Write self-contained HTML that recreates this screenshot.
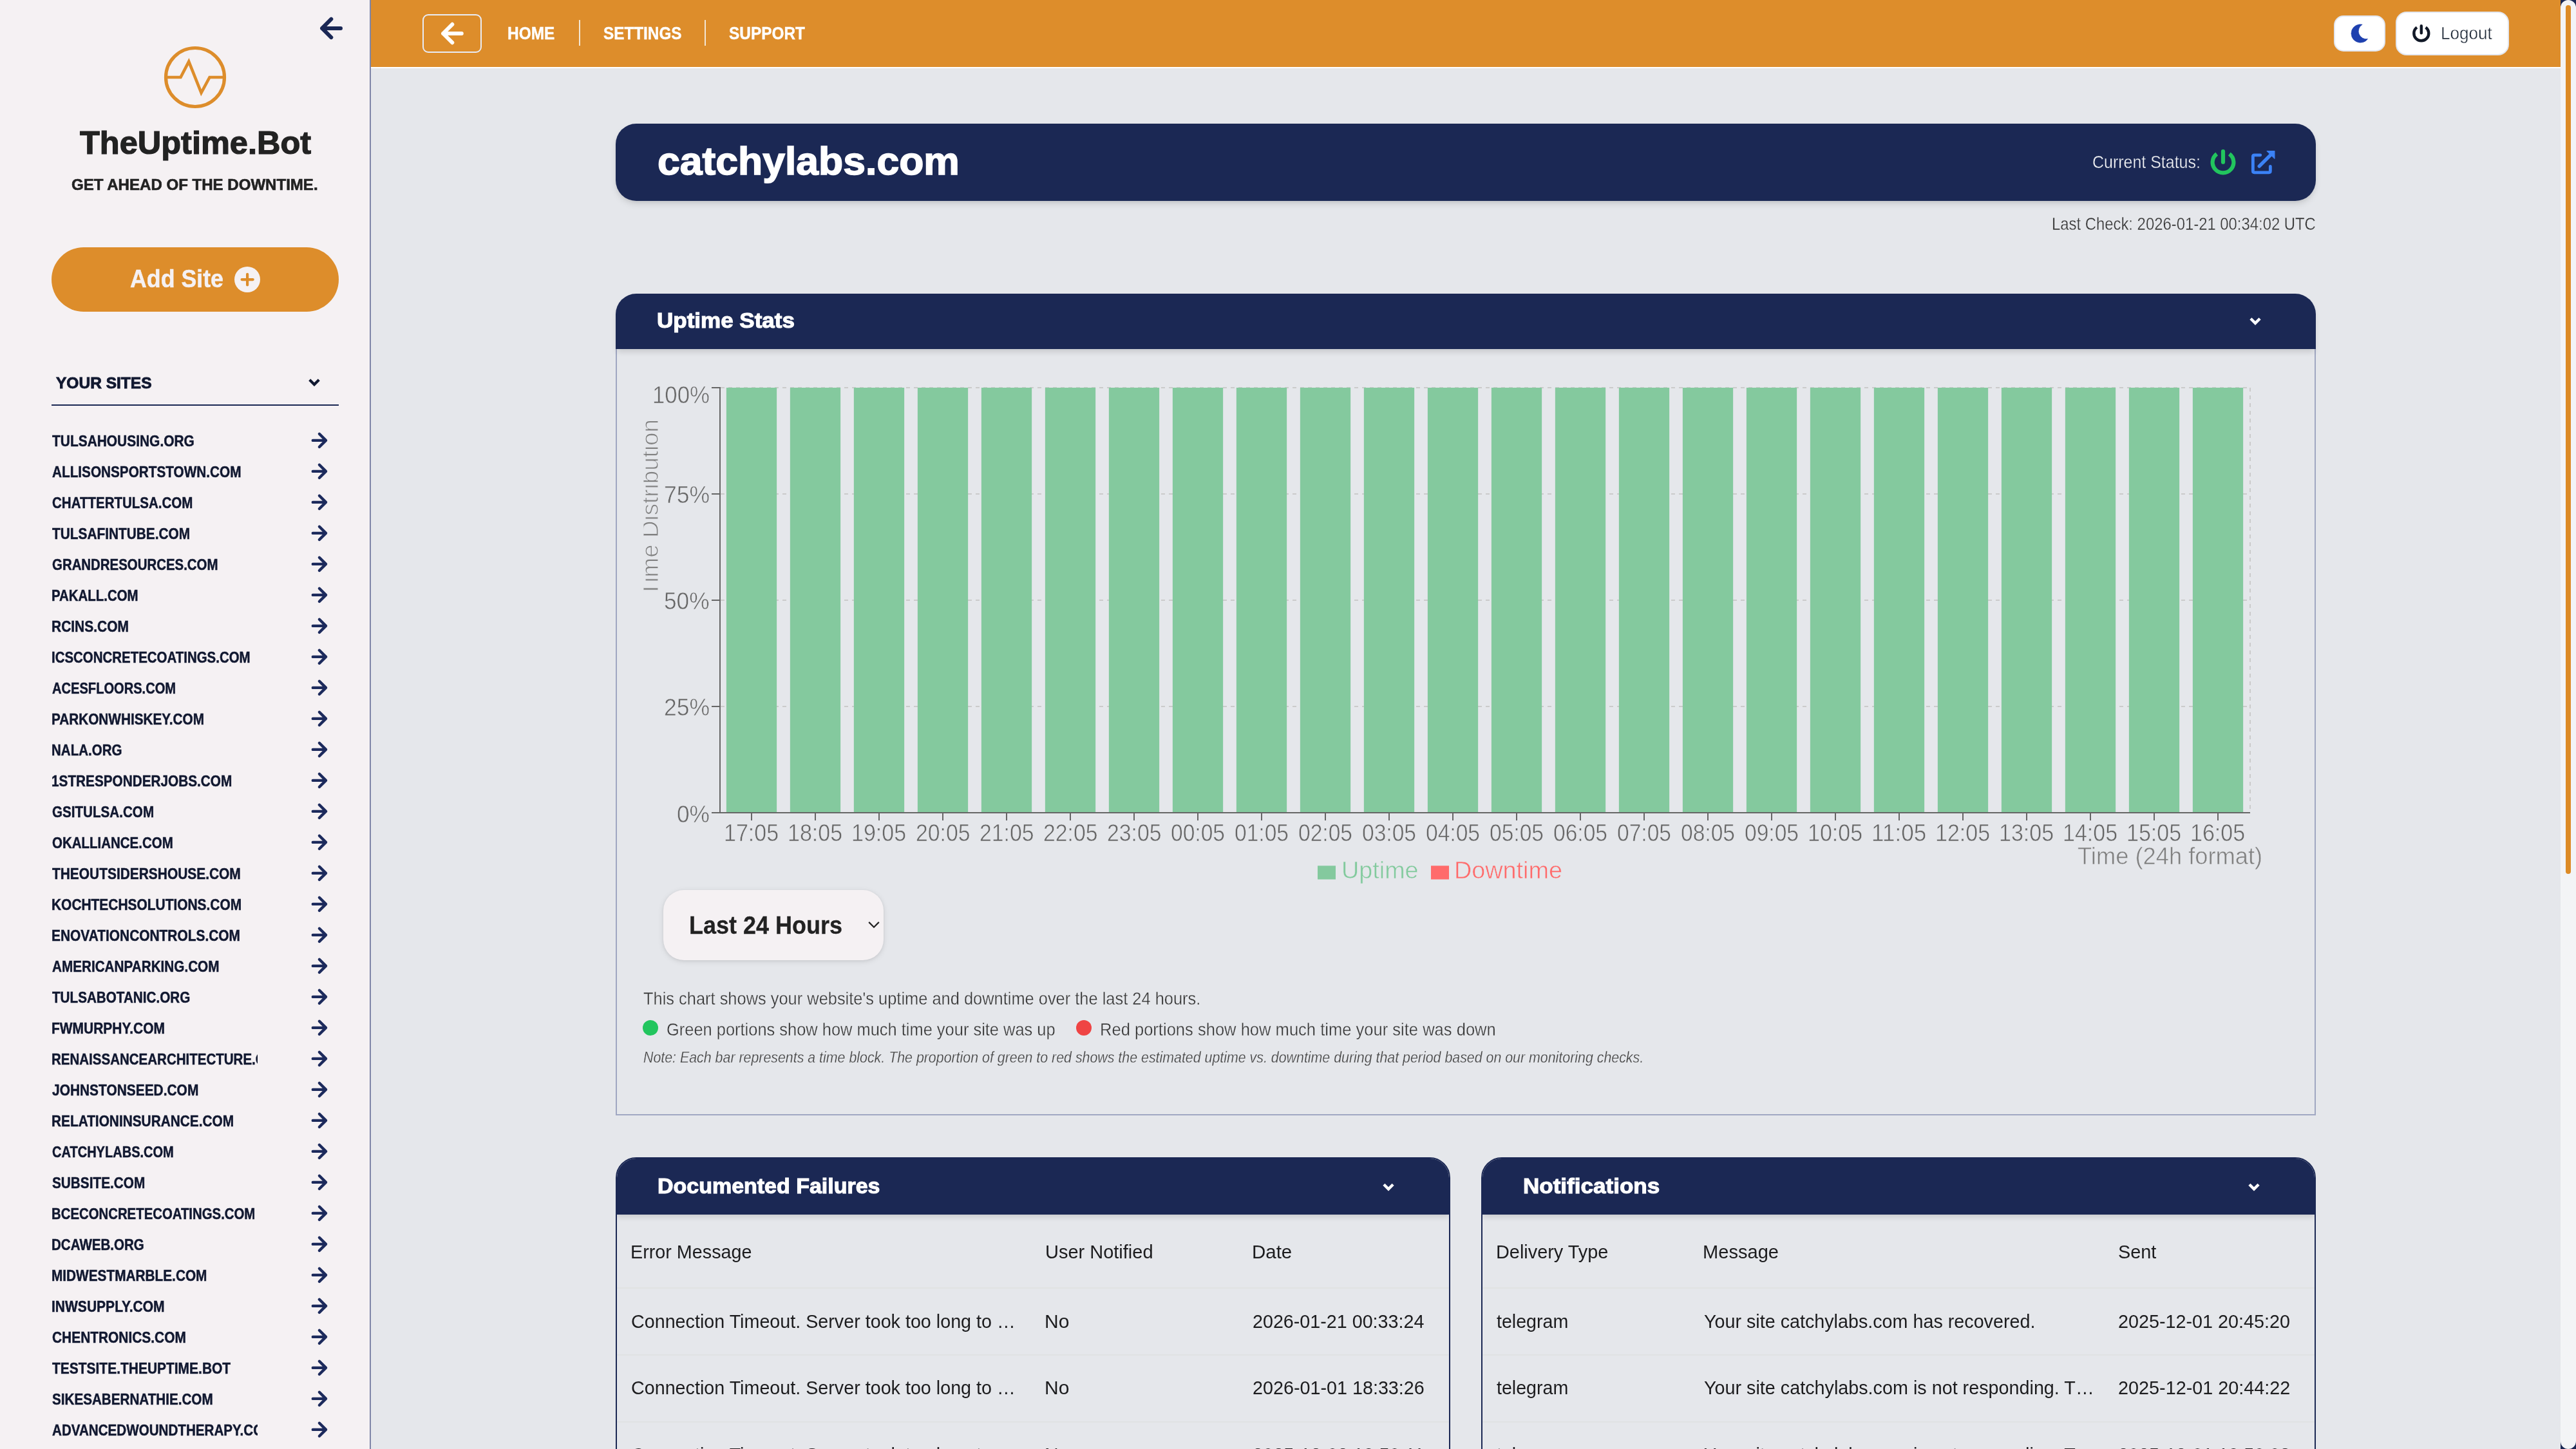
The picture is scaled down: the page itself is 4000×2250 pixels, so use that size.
<!DOCTYPE html>
<html lang="en"><head><meta charset="utf-8"><title>TheUptime.Bot - catchylabs.com</title>
<style>
html,body{margin:0;padding:0}
body{width:4000px;height:2250px;overflow:hidden;position:relative;background:#e5e7eb;font-family:"Liberation Sans",sans-serif}
.t{position:absolute;white-space:nowrap;line-height:1;transform-origin:0 0;font-family:"Liberation Sans",sans-serif}
.a{position:absolute}
svg{position:absolute;left:0;top:0;overflow:visible}
</style></head><body>

<!-- main background -->
<div class="a" style="left:576px;top:106px;width:3400px;height:2144px;background:#e5e7eb"></div>

<!-- SIDEBAR -->
<aside class="a" style="left:0;top:0;width:574px;height:2250px;background:#f5f1f3;border-right:2px solid #7f86a8"></aside>
<button class="a" style="left:80px;top:384px;width:446px;height:100px;border:0;padding:0;border-radius:50px;background:#dd8d2b"></button>
<div class="a" style="left:364px;top:414px;width:40px;height:40px;border-radius:50%;background:#f5f1f3"></div>
<div class="a" style="left:80px;top:628px;width:446px;height:2px;background:#1b2854"></div>
<nav class="a" style="left:80px;top:650px;width:320px;height:1600px;overflow:hidden;will-change:transform">
<div class="a" style="left:-80px;top:-650px;width:600px;height:2250px">
<span class="t" style="left:81.25px;top:674.49px;font-size:23.4px;color:#111830;transform:scaleX(0.8945);font-weight:bold;-webkit-text-stroke:0.5px #111830;">TULSAHOUSING.ORG</span>
<span class="t" style="left:80.93px;top:722.49px;font-size:23.4px;color:#111830;transform:scaleX(0.8868);font-weight:bold;-webkit-text-stroke:0.5px #111830;">ALLISONSPORTSTOWN.COM</span>
<span class="t" style="left:80.61px;top:770.49px;font-size:23.4px;color:#111830;transform:scaleX(0.8770);font-weight:bold;-webkit-text-stroke:0.5px #111830;">CHATTERTULSA.COM</span>
<span class="t" style="left:81.25px;top:818.49px;font-size:23.4px;color:#111830;transform:scaleX(0.8906);font-weight:bold;-webkit-text-stroke:0.5px #111830;">TULSAFINTUBE.COM</span>
<span class="t" style="left:80.61px;top:866.49px;font-size:23.4px;color:#111830;transform:scaleX(0.8729);font-weight:bold;-webkit-text-stroke:0.5px #111830;">GRANDRESOURCES.COM</span>
<span class="t" style="left:79.97px;top:914.49px;font-size:23.4px;color:#111830;transform:scaleX(0.8728);font-weight:bold;-webkit-text-stroke:0.5px #111830;">PAKALL.COM</span>
<span class="t" style="left:79.94px;top:962.49px;font-size:23.4px;color:#111830;transform:scaleX(0.8962);font-weight:bold;-webkit-text-stroke:0.5px #111830;">RCINS.COM</span>
<span class="t" style="left:79.97px;top:1010.49px;font-size:23.4px;color:#111830;transform:scaleX(0.8742);font-weight:bold;-webkit-text-stroke:0.5px #111830;">ICSCONCRETECOATINGS.COM</span>
<span class="t" style="left:80.94px;top:1058.49px;font-size:23.4px;color:#111830;transform:scaleX(0.8594);font-weight:bold;-webkit-text-stroke:0.5px #111830;">ACESFLOORS.COM</span>
<span class="t" style="left:79.95px;top:1106.49px;font-size:23.4px;color:#111830;transform:scaleX(0.8867);font-weight:bold;-webkit-text-stroke:0.5px #111830;">PARKONWHISKEY.COM</span>
<span class="t" style="left:79.97px;top:1154.49px;font-size:23.4px;color:#111830;transform:scaleX(0.8774);font-weight:bold;-webkit-text-stroke:0.5px #111830;">NALA.ORG</span>
<span class="t" style="left:79.95px;top:1202.49px;font-size:23.4px;color:#111830;transform:scaleX(0.8871);font-weight:bold;-webkit-text-stroke:0.5px #111830;">1STRESPONDERJOBS.COM</span>
<span class="t" style="left:80.61px;top:1250.49px;font-size:23.4px;color:#111830;transform:scaleX(0.8814);font-weight:bold;-webkit-text-stroke:0.5px #111830;">GSITULSA.COM</span>
<span class="t" style="left:80.61px;top:1298.49px;font-size:23.4px;color:#111830;transform:scaleX(0.8756);font-weight:bold;-webkit-text-stroke:0.5px #111830;">OKALLIANCE.COM</span>
<span class="t" style="left:81.25px;top:1346.49px;font-size:23.4px;color:#111830;transform:scaleX(0.8940);font-weight:bold;-webkit-text-stroke:0.5px #111830;">THEOUTSIDERSHOUSE.COM</span>
<span class="t" style="left:79.94px;top:1394.49px;font-size:23.4px;color:#111830;transform:scaleX(0.8943);font-weight:bold;-webkit-text-stroke:0.5px #111830;">KOCHTECHSOLUTIONS.COM</span>
<span class="t" style="left:79.94px;top:1442.49px;font-size:23.4px;color:#111830;transform:scaleX(0.8935);font-weight:bold;-webkit-text-stroke:0.5px #111830;">ENOVATIONCONTROLS.COM</span>
<span class="t" style="left:80.93px;top:1490.49px;font-size:23.4px;color:#111830;transform:scaleX(0.8846);font-weight:bold;-webkit-text-stroke:0.5px #111830;">AMERICANPARKING.COM</span>
<span class="t" style="left:81.25px;top:1538.49px;font-size:23.4px;color:#111830;transform:scaleX(0.8833);font-weight:bold;-webkit-text-stroke:0.5px #111830;">TULSABOTANIC.ORG</span>
<span class="t" style="left:79.94px;top:1586.49px;font-size:23.4px;color:#111830;transform:scaleX(0.8966);font-weight:bold;-webkit-text-stroke:0.5px #111830;">FWMURPHY.COM</span>
<span class="t" style="left:79.97px;top:1634.49px;font-size:23.4px;color:#111830;transform:scaleX(0.8768);font-weight:bold;-webkit-text-stroke:0.5px #111830;">RENAISSANCEARCHITECTURE.COM</span>
<span class="t" style="left:81.25px;top:1682.49px;font-size:23.4px;color:#111830;transform:scaleX(0.8938);font-weight:bold;-webkit-text-stroke:0.5px #111830;">JOHNSTONSEED.COM</span>
<span class="t" style="left:79.95px;top:1730.49px;font-size:23.4px;color:#111830;transform:scaleX(0.8903);font-weight:bold;-webkit-text-stroke:0.5px #111830;">RELATIONINSURANCE.COM</span>
<span class="t" style="left:80.62px;top:1778.49px;font-size:23.4px;color:#111830;transform:scaleX(0.8563);font-weight:bold;-webkit-text-stroke:0.5px #111830;">CATCHYLABS.COM</span>
<span class="t" style="left:80.93px;top:1826.49px;font-size:23.4px;color:#111830;transform:scaleX(0.8880);font-weight:bold;-webkit-text-stroke:0.5px #111830;">SUBSITE.COM</span>
<span class="t" style="left:79.98px;top:1874.49px;font-size:23.4px;color:#111830;transform:scaleX(0.8703);font-weight:bold;-webkit-text-stroke:0.5px #111830;">BCECONCRETECOATINGS.COM</span>
<span class="t" style="left:79.97px;top:1922.49px;font-size:23.4px;color:#111830;transform:scaleX(0.8785);font-weight:bold;-webkit-text-stroke:0.5px #111830;">DCAWEB.ORG</span>
<span class="t" style="left:79.95px;top:1970.49px;font-size:23.4px;color:#111830;transform:scaleX(0.8889);font-weight:bold;-webkit-text-stroke:0.5px #111830;">MIDWESTMARBLE.COM</span>
<span class="t" style="left:79.94px;top:2018.49px;font-size:23.4px;color:#111830;transform:scaleX(0.8989);font-weight:bold;-webkit-text-stroke:0.5px #111830;">INWSUPPLY.COM</span>
<span class="t" style="left:80.60px;top:2066.49px;font-size:23.4px;color:#111830;transform:scaleX(0.8936);font-weight:bold;-webkit-text-stroke:0.5px #111830;">CHENTRONICS.COM</span>
<span class="t" style="left:81.25px;top:2114.49px;font-size:23.4px;color:#111830;transform:scaleX(0.8960);font-weight:bold;-webkit-text-stroke:0.5px #111830;">TESTSITE.THEUPTIME.BOT</span>
<span class="t" style="left:80.93px;top:2162.49px;font-size:23.4px;color:#111830;transform:scaleX(0.8824);font-weight:bold;-webkit-text-stroke:0.5px #111830;">SIKESABERNATHIE.COM</span>
<span class="t" style="left:80.93px;top:2210.49px;font-size:23.4px;color:#111830;transform:scaleX(0.8810);font-weight:bold;-webkit-text-stroke:0.5px #111830;">ADVANCEDWOUNDTHERAPY.COM</span>
</div></nav>

<!-- HEADER -->
<header class="a" style="left:576px;top:0;width:3400px;height:104px;background:#dd8d2b;border-bottom:2px solid #fff"></header>
<div class="a" style="left:656px;top:22px;width:88px;height:56px;border:2px solid #e8ecf6;border-radius:9px"></div>
<div class="a" style="left:899px;top:31px;width:2px;height:40px;background:#f3e6d3"></div>
<div class="a" style="left:1094px;top:31px;width:2px;height:40px;background:#f3e6d3"></div>
<div class="a" style="left:3624px;top:24px;width:76px;height:52px;border:2px solid #e3e7f0;border-radius:15px;background:#fff"></div>
<div class="a" style="left:3720px;top:18px;width:172px;height:64px;border:2px solid #e3e7f0;border-radius:17px;background:#fff"></div>

<!-- TITLE BAR -->
<div class="a" style="left:956px;top:192px;width:2640px;height:120px;border-radius:32px;background:#1b2854;box-shadow:0 6px 12px -2px rgba(0,0,0,.12),0 3px 6px -2px rgba(0,0,0,.08)"></div>

<!-- UPTIME PANEL -->
<section class="a" style="left:956px;top:542px;width:2636px;height:1188px;border:2px solid #a0a7c2;border-top:0;box-sizing:content-box"></section>
<div class="a" style="left:956px;top:456px;width:2640px;height:86px;border-radius:32px 32px 0 0;background:#1b2854;box-shadow:0 6px 10px -2px rgba(0,0,0,.14)"></div>
<div class="a" style="left:1030px;top:1382px;width:342px;height:109px;border-radius:32px;background:#f5f1f3;box-shadow:0 2px 10px rgba(0,0,0,.10),0 1px 4px rgba(0,0,0,.06)"></div>
<div class="a" style="left:998px;top:1584px;width:24px;height:24px;border-radius:50%;background:#22c55e"></div>
<div class="a" style="left:1671px;top:1584px;width:24px;height:24px;border-radius:50%;background:#ef4444"></div>

<!-- CARDS -->
<section class="a" style="left:956px;top:1797px;width:1292px;height:500px;border:2px solid #1b2854;border-radius:32px 32px 0 0;overflow:hidden">
 <div class="a" style="left:0;top:0;width:1292px;height:87px;background:#1b2854;box-shadow:0 4px 8px rgba(0,0,0,.12)"></div>
 <div class="a" style="left:0;top:200px;width:1292px;height:2px;background:#e0e2e3"></div>
 <div class="a" style="left:0;top:304px;width:1292px;height:2px;background:#e0e2e3"></div>
 <div class="a" style="left:0;top:408px;width:1292px;height:2px;background:#e0e2e3"></div>
</section>
<section class="a" style="left:2300px;top:1797px;width:1292px;height:500px;border:2px solid #1b2854;border-radius:32px 32px 0 0;overflow:hidden">
 <div class="a" style="left:0;top:0;width:1292px;height:87px;background:#1b2854;box-shadow:0 4px 8px rgba(0,0,0,.12)"></div>
 <div class="a" style="left:0;top:200px;width:1292px;height:2px;background:#e0e2e3"></div>
 <div class="a" style="left:0;top:304px;width:1292px;height:2px;background:#e0e2e3"></div>
 <div class="a" style="left:0;top:408px;width:1292px;height:2px;background:#e0e2e3"></div>
</section>

<!-- SCROLLBAR -->
<div class="a" style="left:3976px;top:0;width:24px;height:2250px;background:#1b2854"></div>
<div class="a" style="left:3976px;top:0;width:24px;height:2250px;border-radius:12px;background:#f3f4f6"></div>
<div class="a" style="left:3984px;top:8px;width:8px;height:1349px;border-radius:4px;background:#dd8b26"></div>

<!-- ICONS + CHART (vector layer) -->
<svg width="4000" height="2250" viewBox="0 0 4000 2250">
 <!-- sidebar collapse arrow -->
 <path d="M529.0 43.9H500.1M514.3 29.7L500.1 43.9L514.3 58.1" stroke="#1a2754" stroke-width="6" fill="none" stroke-linecap="round" stroke-linejoin="round"/>
 <!-- logo -->
 <circle cx="303" cy="120" r="45.5" fill="none" stroke="#dd8d2b" stroke-width="5.2"/>
 <path d="M259 120H280.5L293.2 95.6L312.5 144L325.5 120H347" fill="none" stroke="#dd8d2b" stroke-width="4.6" stroke-linejoin="miter" stroke-miterlimit="10"/>
 <!-- add-site plus -->
 <path d="M384.1 425.8V442.4M375.6 434.1H392.7" stroke="#dd8d2b" stroke-width="4.2" stroke-linecap="round"/>
 <!-- your sites chevron -->
 <path d="M480.7 589.7L488.0 597.0L495.3 589.7" stroke="#111830" stroke-width="4.2" fill="none" stroke-linecap="butt" stroke-linejoin="miter"/>
 <path d="M485.8 683.9H506.0M495.9 673.8L506.0 683.9L495.9 694.0" stroke="#1c2a5c" stroke-width="4.4" fill="none" stroke-linecap="round" stroke-linejoin="round"/><path d="M485.8 731.9H506.0M495.9 721.8L506.0 731.9L495.9 742.0" stroke="#1c2a5c" stroke-width="4.4" fill="none" stroke-linecap="round" stroke-linejoin="round"/><path d="M485.8 779.9H506.0M495.9 769.8L506.0 779.9L495.9 790.0" stroke="#1c2a5c" stroke-width="4.4" fill="none" stroke-linecap="round" stroke-linejoin="round"/><path d="M485.8 827.9H506.0M495.9 817.8L506.0 827.9L495.9 838.0" stroke="#1c2a5c" stroke-width="4.4" fill="none" stroke-linecap="round" stroke-linejoin="round"/><path d="M485.8 875.9H506.0M495.9 865.8L506.0 875.9L495.9 886.0" stroke="#1c2a5c" stroke-width="4.4" fill="none" stroke-linecap="round" stroke-linejoin="round"/><path d="M485.8 923.9H506.0M495.9 913.8L506.0 923.9L495.9 934.0" stroke="#1c2a5c" stroke-width="4.4" fill="none" stroke-linecap="round" stroke-linejoin="round"/><path d="M485.8 971.9H506.0M495.9 961.8L506.0 971.9L495.9 982.0" stroke="#1c2a5c" stroke-width="4.4" fill="none" stroke-linecap="round" stroke-linejoin="round"/><path d="M485.8 1019.9H506.0M495.9 1009.8L506.0 1019.9L495.9 1030.0" stroke="#1c2a5c" stroke-width="4.4" fill="none" stroke-linecap="round" stroke-linejoin="round"/><path d="M485.8 1067.9H506.0M495.9 1057.8L506.0 1067.9L495.9 1078.0" stroke="#1c2a5c" stroke-width="4.4" fill="none" stroke-linecap="round" stroke-linejoin="round"/><path d="M485.8 1115.9H506.0M495.9 1105.8L506.0 1115.9L495.9 1126.0" stroke="#1c2a5c" stroke-width="4.4" fill="none" stroke-linecap="round" stroke-linejoin="round"/><path d="M485.8 1163.9H506.0M495.9 1153.8L506.0 1163.9L495.9 1174.0" stroke="#1c2a5c" stroke-width="4.4" fill="none" stroke-linecap="round" stroke-linejoin="round"/><path d="M485.8 1211.9H506.0M495.9 1201.8L506.0 1211.9L495.9 1222.0" stroke="#1c2a5c" stroke-width="4.4" fill="none" stroke-linecap="round" stroke-linejoin="round"/><path d="M485.8 1259.9H506.0M495.9 1249.8L506.0 1259.9L495.9 1270.0" stroke="#1c2a5c" stroke-width="4.4" fill="none" stroke-linecap="round" stroke-linejoin="round"/><path d="M485.8 1307.9H506.0M495.9 1297.8L506.0 1307.9L495.9 1318.0" stroke="#1c2a5c" stroke-width="4.4" fill="none" stroke-linecap="round" stroke-linejoin="round"/><path d="M485.8 1355.9H506.0M495.9 1345.8L506.0 1355.9L495.9 1366.0" stroke="#1c2a5c" stroke-width="4.4" fill="none" stroke-linecap="round" stroke-linejoin="round"/><path d="M485.8 1403.9H506.0M495.9 1393.8L506.0 1403.9L495.9 1414.0" stroke="#1c2a5c" stroke-width="4.4" fill="none" stroke-linecap="round" stroke-linejoin="round"/><path d="M485.8 1451.9H506.0M495.9 1441.8L506.0 1451.9L495.9 1462.0" stroke="#1c2a5c" stroke-width="4.4" fill="none" stroke-linecap="round" stroke-linejoin="round"/><path d="M485.8 1499.9H506.0M495.9 1489.8L506.0 1499.9L495.9 1510.0" stroke="#1c2a5c" stroke-width="4.4" fill="none" stroke-linecap="round" stroke-linejoin="round"/><path d="M485.8 1547.9H506.0M495.9 1537.8L506.0 1547.9L495.9 1558.0" stroke="#1c2a5c" stroke-width="4.4" fill="none" stroke-linecap="round" stroke-linejoin="round"/><path d="M485.8 1595.9H506.0M495.9 1585.8L506.0 1595.9L495.9 1606.0" stroke="#1c2a5c" stroke-width="4.4" fill="none" stroke-linecap="round" stroke-linejoin="round"/><path d="M485.8 1643.9H506.0M495.9 1633.8L506.0 1643.9L495.9 1654.0" stroke="#1c2a5c" stroke-width="4.4" fill="none" stroke-linecap="round" stroke-linejoin="round"/><path d="M485.8 1691.9H506.0M495.9 1681.8L506.0 1691.9L495.9 1702.0" stroke="#1c2a5c" stroke-width="4.4" fill="none" stroke-linecap="round" stroke-linejoin="round"/><path d="M485.8 1739.9H506.0M495.9 1729.8L506.0 1739.9L495.9 1750.0" stroke="#1c2a5c" stroke-width="4.4" fill="none" stroke-linecap="round" stroke-linejoin="round"/><path d="M485.8 1787.9H506.0M495.9 1777.8L506.0 1787.9L495.9 1798.0" stroke="#1c2a5c" stroke-width="4.4" fill="none" stroke-linecap="round" stroke-linejoin="round"/><path d="M485.8 1835.9H506.0M495.9 1825.8L506.0 1835.9L495.9 1846.0" stroke="#1c2a5c" stroke-width="4.4" fill="none" stroke-linecap="round" stroke-linejoin="round"/><path d="M485.8 1883.9H506.0M495.9 1873.8L506.0 1883.9L495.9 1894.0" stroke="#1c2a5c" stroke-width="4.4" fill="none" stroke-linecap="round" stroke-linejoin="round"/><path d="M485.8 1931.9H506.0M495.9 1921.8L506.0 1931.9L495.9 1942.0" stroke="#1c2a5c" stroke-width="4.4" fill="none" stroke-linecap="round" stroke-linejoin="round"/><path d="M485.8 1979.9H506.0M495.9 1969.8L506.0 1979.9L495.9 1990.0" stroke="#1c2a5c" stroke-width="4.4" fill="none" stroke-linecap="round" stroke-linejoin="round"/><path d="M485.8 2027.9H506.0M495.9 2017.8L506.0 2027.9L495.9 2038.0" stroke="#1c2a5c" stroke-width="4.4" fill="none" stroke-linecap="round" stroke-linejoin="round"/><path d="M485.8 2075.9H506.0M495.9 2065.8L506.0 2075.9L495.9 2086.0" stroke="#1c2a5c" stroke-width="4.4" fill="none" stroke-linecap="round" stroke-linejoin="round"/><path d="M485.8 2123.9H506.0M495.9 2113.8L506.0 2123.9L495.9 2134.0" stroke="#1c2a5c" stroke-width="4.4" fill="none" stroke-linecap="round" stroke-linejoin="round"/><path d="M485.8 2171.9H506.0M495.9 2161.8L506.0 2171.9L495.9 2182.0" stroke="#1c2a5c" stroke-width="4.4" fill="none" stroke-linecap="round" stroke-linejoin="round"/><path d="M485.8 2219.9H506.0M495.9 2209.8L506.0 2219.9L495.9 2230.0" stroke="#1c2a5c" stroke-width="4.4" fill="none" stroke-linecap="round" stroke-linejoin="round"/>
 <!-- header back arrow -->
 <path d="M716.8 52.0H688.1M702.3 37.8L688.1 52.0L702.3 66.2" stroke="#ffffff" stroke-width="6" fill="none" stroke-linecap="round" stroke-linejoin="round"/>
 <!-- moon -->
 <path d="M3668.2 38.1A14.2 14.2 0 1 0 3676.6 60.4A12.1 12.1 0 0 1 3668.2 38.1Z" fill="#1e40af" stroke="#1e40af" stroke-width="0.6" stroke-linejoin="round"/>
 <!-- logout power icon -->
 <path d="M3753.0 42.5A11.5 11.5 0 1 0 3766.6 42.5" fill="none" stroke="#111827" stroke-width="4.4" stroke-linecap="butt"/>
 <path d="M3759.8 40.3V51.3" stroke="#111827" stroke-width="4.4" stroke-linecap="round"/>
 <!-- status power icon -->
 <path d="M3442.2 238.9A16.35 16.35 0 1 0 3461.8 238.9" fill="none" stroke="#22c55e" stroke-width="6.2" stroke-linecap="butt"/>
 <path d="M3452 235.1V251.7" stroke="#22c55e" stroke-width="6.2" stroke-linecap="round"/>
 <!-- external link -->
 <path d="M3509.8 240.8H3500.6Q3498.35 240.8 3498.35 243.05V265.55Q3498.35 267.8 3500.6 267.8H3523.1Q3525.35 267.8 3525.35 265.55V258.3" fill="none" stroke="#3b82f6" stroke-width="4.8" stroke-linecap="round"/>
 <path d="M3508.2 258.1L3527 239.3" stroke="#3b82f6" stroke-width="5.4" stroke-linecap="round"/>
 <path d="M3520.2 234.5H3531.9V246.2Z" fill="#3b82f6" stroke="#3b82f6" stroke-width="1.2" stroke-linejoin="round"/>
 <!-- panel chevrons -->
 <path d="M3494.9 494.7L3502.0 501.8L3509.1 494.7" stroke="#ffffff" stroke-width="4.4" fill="none" stroke-linecap="butt" stroke-linejoin="miter"/>
 <path d="M2148.9 1839.2L2156.0 1846.3L2163.1 1839.2" stroke="#ffffff" stroke-width="4.4" fill="none" stroke-linecap="butt" stroke-linejoin="miter"/>
 <path d="M3492.9 1839.2L3500.0 1846.3L3507.1 1839.2" stroke="#ffffff" stroke-width="4.4" fill="none" stroke-linecap="butt" stroke-linejoin="miter"/>
 <!-- select chevron -->
 <path d="M1349.2 1431.9L1357 1439.7L1364.8 1431.9" fill="none" stroke="#222" stroke-width="2.2" stroke-linecap="butt" stroke-linejoin="miter"/>
 <!-- chart -->
 <line x1="1119" y1="602" x2="3494" y2="602" stroke="#cbcbcb" stroke-width="2" stroke-dasharray="6 6"/><line x1="1119" y1="767" x2="3494" y2="767" stroke="#cbcbcb" stroke-width="2" stroke-dasharray="6 6"/><line x1="1119" y1="932" x2="3494" y2="932" stroke="#cbcbcb" stroke-width="2" stroke-dasharray="6 6"/><line x1="1119" y1="1097" x2="3494" y2="1097" stroke="#cbcbcb" stroke-width="2" stroke-dasharray="6 6"/><line x1="3494" y1="602" x2="3494" y2="1262" stroke="#cbcbcb" stroke-width="2" stroke-dasharray="6 6"/>
 <rect x="1127.85" y="602" width="78.3" height="660" fill="#84c99e"/><rect x="1226.85" y="602" width="78.3" height="660" fill="#84c99e"/><rect x="1325.85" y="602" width="78.3" height="660" fill="#84c99e"/><rect x="1424.85" y="602" width="78.3" height="660" fill="#84c99e"/><rect x="1523.85" y="602" width="78.3" height="660" fill="#84c99e"/><rect x="1622.85" y="602" width="78.3" height="660" fill="#84c99e"/><rect x="1721.85" y="602" width="78.3" height="660" fill="#84c99e"/><rect x="1820.85" y="602" width="78.3" height="660" fill="#84c99e"/><rect x="1919.85" y="602" width="78.3" height="660" fill="#84c99e"/><rect x="2018.85" y="602" width="78.3" height="660" fill="#84c99e"/><rect x="2117.85" y="602" width="78.3" height="660" fill="#84c99e"/><rect x="2216.85" y="602" width="78.3" height="660" fill="#84c99e"/><rect x="2315.85" y="602" width="78.3" height="660" fill="#84c99e"/><rect x="2414.85" y="602" width="78.3" height="660" fill="#84c99e"/><rect x="2513.85" y="602" width="78.3" height="660" fill="#84c99e"/><rect x="2612.85" y="602" width="78.3" height="660" fill="#84c99e"/><rect x="2711.85" y="602" width="78.3" height="660" fill="#84c99e"/><rect x="2810.85" y="602" width="78.3" height="660" fill="#84c99e"/><rect x="2909.85" y="602" width="78.3" height="660" fill="#84c99e"/><rect x="3008.85" y="602" width="78.3" height="660" fill="#84c99e"/><rect x="3107.85" y="602" width="78.3" height="660" fill="#84c99e"/><rect x="3206.85" y="602" width="78.3" height="660" fill="#84c99e"/><rect x="3305.85" y="602" width="78.3" height="660" fill="#84c99e"/><rect x="3404.85" y="602" width="78.3" height="660" fill="#84c99e"/>
 <rect x="1117" y="601" width="2" height="662" fill="#666"/>
 <rect x="1117" y="1261" width="2377" height="2" fill="#666"/>
 <rect x="1105" y="601" width="13" height="2" fill="#666"/><rect x="1105" y="766" width="13" height="2" fill="#666"/><rect x="1105" y="931" width="13" height="2" fill="#666"/><rect x="1105" y="1096" width="13" height="2" fill="#666"/><rect x="1105" y="1261" width="13" height="2" fill="#666"/>
 <rect x="1166.0" y="1263" width="2" height="11" fill="#666"/><rect x="1265.0" y="1263" width="2" height="11" fill="#666"/><rect x="1364.0" y="1263" width="2" height="11" fill="#666"/><rect x="1463.0" y="1263" width="2" height="11" fill="#666"/><rect x="1562.0" y="1263" width="2" height="11" fill="#666"/><rect x="1661.0" y="1263" width="2" height="11" fill="#666"/><rect x="1760.0" y="1263" width="2" height="11" fill="#666"/><rect x="1859.0" y="1263" width="2" height="11" fill="#666"/><rect x="1958.0" y="1263" width="2" height="11" fill="#666"/><rect x="2057.0" y="1263" width="2" height="11" fill="#666"/><rect x="2156.0" y="1263" width="2" height="11" fill="#666"/><rect x="2255.0" y="1263" width="2" height="11" fill="#666"/><rect x="2354.0" y="1263" width="2" height="11" fill="#666"/><rect x="2453.0" y="1263" width="2" height="11" fill="#666"/><rect x="2552.0" y="1263" width="2" height="11" fill="#666"/><rect x="2651.0" y="1263" width="2" height="11" fill="#666"/><rect x="2750.0" y="1263" width="2" height="11" fill="#666"/><rect x="2849.0" y="1263" width="2" height="11" fill="#666"/><rect x="2948.0" y="1263" width="2" height="11" fill="#666"/><rect x="3047.0" y="1263" width="2" height="11" fill="#666"/><rect x="3146.0" y="1263" width="2" height="11" fill="#666"/><rect x="3245.0" y="1263" width="2" height="11" fill="#666"/><rect x="3344.0" y="1263" width="2" height="11" fill="#666"/><rect x="3443.0" y="1263" width="2" height="11" fill="#666"/>
 <!-- legend squares -->
 <rect x="2046" y="1344.3" width="28" height="21.2" fill="#84c99e"/>
 <rect x="2222" y="1344.3" width="28" height="21.2" fill="#ff6b6b"/>
</svg>

<div id="txt" class="a" style="left:0;top:0;width:4000px;height:2250px;will-change:transform">
<svg width="4000" height="2250" viewBox="0 0 4000 2250"><defs><clipPath id="ycl"><rect x="999.5" y="560" width="120" height="720"/></clipPath></defs><g clip-path="url(#ycl)"><text transform="translate(1022.2 925.7) rotate(-90) scale(0.9895 1)" font-family="Liberation Sans, sans-serif" font-size="37.21" fill="#808080" stroke="#e5e7eb" stroke-width="1.1">Time Distribution</text></g></svg>
<span class="t" style="left:123.50px;top:198.41px;font-size:49.13px;color:#222;transform:scaleX(1.0280);font-weight:bold;-webkit-text-stroke:1.2px #222;">TheUptime.Bot</span>
<span class="t" style="left:111.45px;top:274.82px;font-size:23.84px;color:#222;transform:scaleX(1.0094);font-weight:bold;-webkit-text-stroke:0.6px #222;">GET AHEAD OF THE DOWNTIME.</span>
<span class="t" style="left:201.99px;top:412.58px;font-size:39.24px;color:#f5f1f3;transform:scaleX(0.9108);font-weight:bold;-webkit-text-stroke:0.5px #f5f1f3;">Add Site</span>
<span class="t" style="left:87.27px;top:583.18px;font-size:24.71px;color:#111830;transform:scaleX(0.9931);font-weight:bold;-webkit-text-stroke:0.9px #111830;">YOUR SITES</span>
<span class="t" style="left:788.07px;top:37.99px;font-size:27.18px;color:#fff;transform:scaleX(0.9011);font-weight:bold;-webkit-text-stroke:0.4px #fff;">HOME</span>
<span class="t" style="left:936.52px;top:37.99px;font-size:27.18px;color:#fff;transform:scaleX(0.8941);font-weight:bold;-webkit-text-stroke:0.4px #fff;">SETTINGS</span>
<span class="t" style="left:1131.72px;top:37.99px;font-size:27.18px;color:#fff;transform:scaleX(0.8975);font-weight:bold;-webkit-text-stroke:0.4px #fff;">SUPPORT</span>
<span class="t" style="left:3790.14px;top:39.34px;font-size:26.89px;color:#1f2937;transform:scaleX(0.9689);-webkit-text-stroke:0.35px #fff;">Logout</span>
<span class="t" style="left:1020.85px;top:218.82px;font-size:62px;color:#fff;transform:scaleX(1.0079);font-weight:bold;-webkit-text-stroke:1.6px #fff;">catchylabs.com</span>
<span class="t" style="left:3248.71px;top:239.23px;font-size:27.03px;color:#f3f4f6;transform:scaleX(0.9240);-webkit-text-stroke:0.35px #1b2854;">Current Status:</span>
<span class="t" style="left:3186.01px;top:335.14px;font-size:27.03px;color:#333;transform:scaleX(0.8832);-webkit-text-stroke:0.35px #e5e7eb;">Last Check: 2026-01-21 00:34:02 UTC</span>
<span class="t" style="left:1019.61px;top:481.05px;font-size:33.14px;color:#fff;transform:scaleX(1.0563);font-weight:bold;-webkit-text-stroke:1.1px #fff;">Uptime Stats</span>
<span class="t" style="left:1012.61px;top:596.04px;font-size:36.57px;color:#666;transform:scaleX(0.9519);-webkit-text-stroke:0.6px #e5e7eb;">100%</span>
<span class="t" style="left:1030.52px;top:751.04px;font-size:36.57px;color:#666;transform:scaleX(0.9720);-webkit-text-stroke:0.6px #e5e7eb;">75%</span>
<span class="t" style="left:1031.09px;top:916.04px;font-size:36.57px;color:#666;transform:scaleX(0.9642);-webkit-text-stroke:0.6px #e5e7eb;">50%</span>
<span class="t" style="left:1030.52px;top:1081.04px;font-size:36.57px;color:#666;transform:scaleX(0.9720);-webkit-text-stroke:0.6px #e5e7eb;">25%</span>
<span class="t" style="left:1050.69px;top:1246.74px;font-size:36.57px;color:#666;transform:scaleX(0.9644);-webkit-text-stroke:0.6px #e5e7eb;">0%</span>
<span class="t" style="left:1124.06px;top:1276.04px;font-size:36.57px;color:#666;transform:scaleX(0.9302);-webkit-text-stroke:0.6px #e5e7eb;">17:05</span>
<span class="t" style="left:1223.06px;top:1276.04px;font-size:36.57px;color:#666;transform:scaleX(0.9302);-webkit-text-stroke:0.6px #e5e7eb;">18:05</span>
<span class="t" style="left:1322.06px;top:1276.04px;font-size:36.57px;color:#666;transform:scaleX(0.9302);-webkit-text-stroke:0.6px #e5e7eb;">19:05</span>
<span class="t" style="left:1421.61px;top:1276.04px;font-size:36.57px;color:#666;transform:scaleX(0.9242);-webkit-text-stroke:0.6px #e5e7eb;">20:05</span>
<span class="t" style="left:1520.61px;top:1276.04px;font-size:36.57px;color:#666;transform:scaleX(0.9242);-webkit-text-stroke:0.6px #e5e7eb;">21:05</span>
<span class="t" style="left:1619.61px;top:1276.04px;font-size:36.57px;color:#666;transform:scaleX(0.9242);-webkit-text-stroke:0.6px #e5e7eb;">22:05</span>
<span class="t" style="left:1718.61px;top:1276.04px;font-size:36.57px;color:#666;transform:scaleX(0.9242);-webkit-text-stroke:0.6px #e5e7eb;">23:05</span>
<span class="t" style="left:1818.14px;top:1276.04px;font-size:36.57px;color:#666;transform:scaleX(0.9182);-webkit-text-stroke:0.6px #e5e7eb;">00:05</span>
<span class="t" style="left:1917.14px;top:1276.04px;font-size:36.57px;color:#666;transform:scaleX(0.9182);-webkit-text-stroke:0.6px #e5e7eb;">01:05</span>
<span class="t" style="left:2016.14px;top:1276.04px;font-size:36.57px;color:#666;transform:scaleX(0.9182);-webkit-text-stroke:0.6px #e5e7eb;">02:05</span>
<span class="t" style="left:2115.14px;top:1276.04px;font-size:36.57px;color:#666;transform:scaleX(0.9182);-webkit-text-stroke:0.6px #e5e7eb;">03:05</span>
<span class="t" style="left:2214.14px;top:1276.04px;font-size:36.57px;color:#666;transform:scaleX(0.9182);-webkit-text-stroke:0.6px #e5e7eb;">04:05</span>
<span class="t" style="left:2313.14px;top:1276.04px;font-size:36.57px;color:#666;transform:scaleX(0.9182);-webkit-text-stroke:0.6px #e5e7eb;">05:05</span>
<span class="t" style="left:2412.14px;top:1276.04px;font-size:36.57px;color:#666;transform:scaleX(0.9182);-webkit-text-stroke:0.6px #e5e7eb;">06:05</span>
<span class="t" style="left:2511.14px;top:1276.04px;font-size:36.57px;color:#666;transform:scaleX(0.9182);-webkit-text-stroke:0.6px #e5e7eb;">07:05</span>
<span class="t" style="left:2610.14px;top:1276.04px;font-size:36.57px;color:#666;transform:scaleX(0.9182);-webkit-text-stroke:0.6px #e5e7eb;">08:05</span>
<span class="t" style="left:2709.14px;top:1276.04px;font-size:36.57px;color:#666;transform:scaleX(0.9182);-webkit-text-stroke:0.6px #e5e7eb;">09:05</span>
<span class="t" style="left:2807.06px;top:1276.04px;font-size:36.57px;color:#666;transform:scaleX(0.9302);-webkit-text-stroke:0.6px #e5e7eb;">10:05</span>
<span class="t" style="left:2906.00px;top:1276.04px;font-size:36.57px;color:#666;transform:scaleX(0.9599);-webkit-text-stroke:0.6px #e5e7eb;">11:05</span>
<span class="t" style="left:3005.06px;top:1276.04px;font-size:36.57px;color:#666;transform:scaleX(0.9302);-webkit-text-stroke:0.6px #e5e7eb;">12:05</span>
<span class="t" style="left:3104.06px;top:1276.04px;font-size:36.57px;color:#666;transform:scaleX(0.9302);-webkit-text-stroke:0.6px #e5e7eb;">13:05</span>
<span class="t" style="left:3203.06px;top:1276.04px;font-size:36.57px;color:#666;transform:scaleX(0.9302);-webkit-text-stroke:0.6px #e5e7eb;">14:05</span>
<span class="t" style="left:3302.06px;top:1276.04px;font-size:36.57px;color:#666;transform:scaleX(0.9302);-webkit-text-stroke:0.6px #e5e7eb;">15:05</span>
<span class="t" style="left:3401.06px;top:1276.04px;font-size:36.57px;color:#666;transform:scaleX(0.9302);-webkit-text-stroke:0.6px #e5e7eb;">16:05</span>
<span class="t" style="left:3226.22px;top:1311.01px;font-size:37.79px;color:#808080;transform:scaleX(0.9611);-webkit-text-stroke:0.6px #e5e7eb;">Time (24h format)</span>
<span class="t" style="left:2082.83px;top:1333.10px;font-size:37.21px;color:#82ca9d;transform:scaleX(1.0148);-webkit-text-stroke:0.6px #e5e7eb;">Uptime</span>
<span class="t" style="left:2258.24px;top:1333.10px;font-size:37.21px;color:#ff6b6b;transform:scaleX(1.0156);-webkit-text-stroke:0.6px #e5e7eb;">Downtime</span>
<span class="t" style="left:1069.90px;top:1417.53px;font-size:38.95px;color:#222;transform:scaleX(0.9248);font-weight:bold;-webkit-text-stroke:0.3px #222;">Last 24 Hours</span>
<span class="t" style="left:998.68px;top:1538.12px;font-size:27.03px;color:#363636;transform:scaleX(0.9409);-webkit-text-stroke:0.35px #e5e7eb;">This chart shows your website's uptime and downtime over the last 24 hours.</span>
<span class="t" style="left:1035.18px;top:1585.52px;font-size:27.03px;color:#363636;transform:scaleX(0.9415);-webkit-text-stroke:0.35px #e5e7eb;">Green portions show how much time your site was up</span>
<span class="t" style="left:1707.78px;top:1585.52px;font-size:27.03px;color:#363636;transform:scaleX(0.9455);-webkit-text-stroke:0.35px #e5e7eb;">Red portions show how much time your site was down</span>
<span class="t" style="left:998.56px;top:1630.52px;font-size:23.55px;color:#404040;transform:scaleX(0.9072);font-style:italic;-webkit-text-stroke:0.3px #e5e7eb;">Note: Each bar represents a time block. The proportion of green to red shows the estimated uptime vs. downtime during that period based on our monitoring checks.</span>
<span class="t" style="left:1021.13px;top:1824.77px;font-size:32.99px;color:#fff;transform:scaleX(1.0299);font-weight:bold;-webkit-text-stroke:1.1px #fff;">Documented Failures</span>
<span class="t" style="left:2365.36px;top:1824.77px;font-size:32.99px;color:#fff;transform:scaleX(1.0622);font-weight:bold;-webkit-text-stroke:1.1px #fff;">Notifications</span>
<span class="t" style="left:978.95px;top:1930.14px;font-size:28.78px;color:#1c1c1e;transform:scaleX(0.9994);">Error Message</span>
<span class="t" style="left:1622.99px;top:1930.14px;font-size:28.78px;color:#1c1c1e;transform:scaleX(1.0078);">User Notified</span>
<span class="t" style="left:1944.30px;top:1930.14px;font-size:28.78px;color:#1c1c1e;transform:scaleX(1.0248);">Date</span>
<span class="t" style="left:2322.74px;top:1930.14px;font-size:28.78px;color:#1c1c1e;transform:scaleX(1.0034);">Delivery Type</span>
<span class="t" style="left:2644.13px;top:1930.14px;font-size:28.78px;color:#1c1c1e;transform:scaleX(1.0109);">Message</span>
<span class="t" style="left:3289.10px;top:1930.14px;font-size:28.78px;color:#1c1c1e;transform:scaleX(1.0034);">Sent</span>
<span class="t" style="left:979.65px;top:2038.44px;font-size:28.78px;color:#1c1c1e;transform:scaleX(0.9977);">Connection Timeout. Server took too long to …</span>
<span class="t" style="left:1622.46px;top:2038.44px;font-size:28.78px;color:#1c1c1e;transform:scaleX(1.0427);">No</span>
<span class="t" style="left:1944.75px;top:2038.44px;font-size:28.78px;color:#1c1c1e;transform:scaleX(0.9971);">2026-01-21 00:33:24</span>
<span class="t" style="left:2324.40px;top:2038.44px;font-size:28.78px;color:#1c1c1e;transform:scaleX(0.9938);">telegram</span>
<span class="t" style="left:2645.95px;top:2038.44px;font-size:28.78px;color:#1c1c1e;transform:scaleX(0.9981);">Your site catchylabs.com has recovered.</span>
<span class="t" style="left:3288.65px;top:2038.44px;font-size:28.78px;color:#1c1c1e;transform:scaleX(0.9993);">2025-12-01 20:45:20</span>
<span class="t" style="left:979.65px;top:2140.84px;font-size:28.78px;color:#1c1c1e;transform:scaleX(0.9977);">Connection Timeout. Server took too long to …</span>
<span class="t" style="left:1622.46px;top:2140.84px;font-size:28.78px;color:#1c1c1e;transform:scaleX(1.0427);">No</span>
<span class="t" style="left:1944.75px;top:2140.84px;font-size:28.78px;color:#1c1c1e;transform:scaleX(0.9988);">2026-01-01 18:33:26</span>
<span class="t" style="left:2324.40px;top:2140.84px;font-size:28.78px;color:#1c1c1e;transform:scaleX(0.9938);">telegram</span>
<span class="t" style="left:2645.95px;top:2140.84px;font-size:28.78px;color:#1c1c1e;transform:scaleX(0.9994);">Your site catchylabs.com is not responding. T…</span>
<span class="t" style="left:3288.65px;top:2140.84px;font-size:28.78px;color:#1c1c1e;transform:scaleX(1.0010);">2025-12-01 20:44:22</span>
<span class="t" style="left:979.65px;top:2245.24px;font-size:28.78px;color:#1c1c1e;transform:scaleX(0.9977);">Connection Timeout. Server took too long to …</span>
<span class="t" style="left:1622.46px;top:2245.24px;font-size:28.78px;color:#1c1c1e;transform:scaleX(1.0427);">No</span>
<span class="t" style="left:1944.74px;top:2245.24px;font-size:28.78px;color:#1c1c1e;transform:scaleX(1.0069);">2025-12-02 19:50:11</span>
<span class="t" style="left:2324.40px;top:2245.24px;font-size:28.78px;color:#1c1c1e;transform:scaleX(0.9938);">telegram</span>
<span class="t" style="left:2645.95px;top:2245.24px;font-size:28.78px;color:#1c1c1e;transform:scaleX(0.9994);">Your site catchylabs.com is not responding. T…</span>
<span class="t" style="left:3288.65px;top:2245.24px;font-size:28.78px;color:#1c1c1e;transform:scaleX(1.0010);">2025-12-01 19:50:08</span>
</div>
<script>(function(){var s=window.innerWidth/4000;if(s>0&&Math.abs(s-1)>0.002){var b=document.body;b.style.transformOrigin='0 0';b.style.transform='scale('+s+')';document.documentElement.style.overflow='hidden';}})();</script>
</body></html>
